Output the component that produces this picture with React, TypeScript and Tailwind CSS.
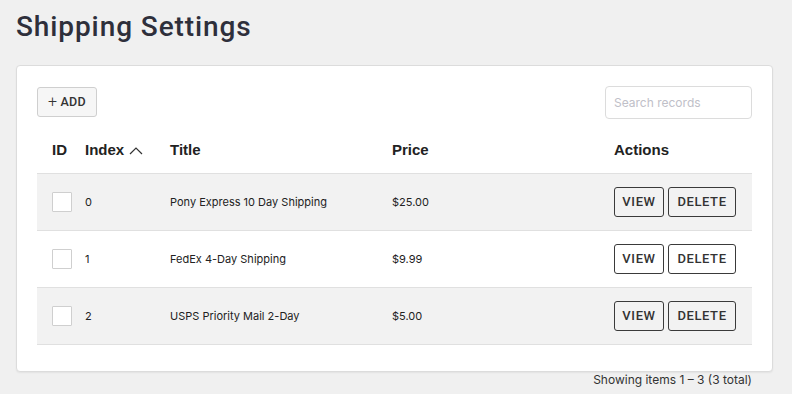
import React from 'react'

const rows = [
  { id: 0, title: 'Pony Express 10 Day Shipping', price: '$25.00' },
  { id: 1, title: 'FedEx 4-Day Shipping', price: '$9.99' },
  { id: 2, title: 'USPS Priority Mail 2-Day', price: '$5.00' },
]

export default function App() {
  return (
    <div className="min-h-[394px] bg-[#f0f0f0] pl-4 pr-[19px] pt-[7px] font-['Liberation_Sans',sans-serif] text-[#333]">
      <h1 className="font-['Roboto',sans-serif] text-[28px] font-medium leading-[40px] tracking-[0.9px] text-[#2e2f3b]">
        Shipping Settings
      </h1>

      <div className="mt-[18px] rounded-[4px] border border-[#dcdcdc] bg-white px-5 pb-[26px] pt-[21px] shadow-[0_1px_2px_rgba(0,0,0,0.06)]">
        <div className="flex items-start justify-between">
          <button className="flex h-[30px] w-[60px] items-center justify-center gap-[3px] rounded-[3px] border border-[#cfcfcf] bg-[#f6f6f6] font-['Roboto',sans-serif] text-[12.5px] font-medium tracking-[0.3px] text-[#333]">
            <span className="text-[16px] font-light leading-none">+</span>ADD
          </button>
          <div className="-mt-px flex h-[33px] w-[147px] items-center rounded-[4px] border border-[#dcdcdc] px-2 font-['Inter',sans-serif] text-[12px] text-[#c0c0c8]">
            Search records
          </div>
        </div>

        <div className="mt-[15px]">
          <div className="flex h-[40px] items-center border-b border-[#e0e0e0] pb-[6px] text-[15px] font-bold text-[#222]">
            <div className="w-[48px] pl-[15px]">ID</div>
            <div className="flex w-[85px] items-center gap-[5px]">
              Index
              <svg width="14" height="10" viewBox="0 0 14 10" fill="none" stroke="#333" strokeWidth="1.2">
                <path d="M1 8 L7 2 L13 8" />
              </svg>
            </div>
            <div className="w-[222px]">Title</div>
            <div className="w-[222px]">Price</div>
            <div>Actions</div>
          </div>

          {rows.map((r, i) => (
            <div
              key={r.id}
              className={`flex h-[57px] items-center border-b border-[#e0e0e0] font-['Inter',sans-serif] text-[11px] text-[#222] ${i % 2 === 0 ? 'bg-[#f2f2f2]' : 'bg-white'}`}
            >
              <div className="w-[48px] pl-[15px]">
                <div className="h-[20px] w-[20px] rounded-[1px] border border-[#cfcfcf] bg-white" />
              </div>
              <div className="w-[85px]">{r.id}</div>
              <div className="w-[222px]">{r.title}</div>
              <div className="w-[222px]">{r.price}</div>
              <div className="flex gap-[4px]">
                <button className="h-[30px] w-[50px] rounded-[3px] border border-[#3a3a3a] bg-transparent font-['Roboto',sans-serif] text-[13px] font-medium tracking-[0.6px] text-[#333]">
                  VIEW
                </button>
                <button className="h-[30px] w-[68px] rounded-[3px] border border-[#3a3a3a] bg-transparent font-['Roboto',sans-serif] text-[13px] font-medium tracking-[0.6px] text-[#333]">
                  DELETE
                </button>
              </div>
            </div>
          ))}
        </div>
      </div>

      <div className="flex justify-end pr-[21px] pt-px font-['Inter',sans-serif] text-[12px] leading-[14px] text-[#333]">
        Showing items 1 – 3 (3 total)
      </div>
    </div>
  )
}
